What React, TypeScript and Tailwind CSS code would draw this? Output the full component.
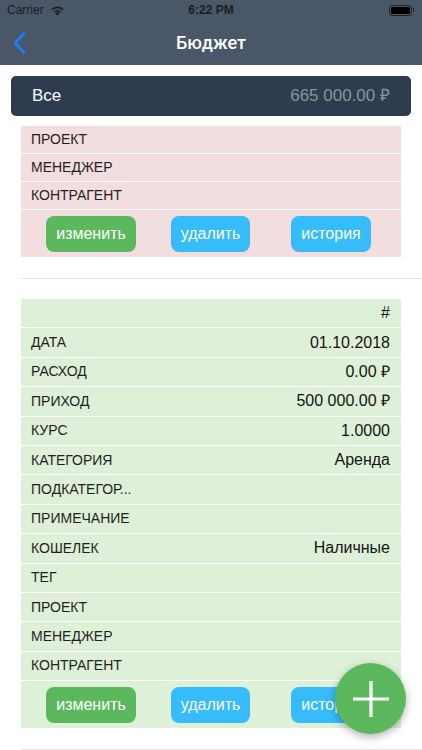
import React from 'react'

type Row = { label: string; value?: string }

const PINK_ROWS: Row[] = [{ label: 'ПРОЕКТ' }, { label: 'МЕНЕДЖЕР' }, { label: 'КОНТРАГЕНТ' }]

const GREEN_ROWS: Row[] = [
  { label: '', value: '#' },
  { label: 'ДАТА', value: '01.10.2018' },
  { label: 'РАСХОД', value: '0.00 ₽' },
  { label: 'ПРИХОД', value: '500 000.00 ₽' },
  { label: 'КУРС', value: '1.0000' },
  { label: 'КАТЕГОРИЯ', value: 'Аренда' },
  { label: 'ПОДКАТЕГОР...' },
  { label: 'ПРИМЕЧАНИЕ' },
  { label: 'КОШЕЛЕК', value: 'Наличные' },
  { label: 'ТЕГ' },
  { label: 'ПРОЕКТ' },
  { label: 'МЕНЕДЖЕР' },
  { label: 'КОНТРАГЕНТ' },
]

function Wifi() {
  return (
    <svg width="15" height="11" viewBox="0 0 15 11" className="ml-[6px]">
      <path d="M7.5 10.6 L5.3 8.2 A3.2 3.2 0 0 1 9.7 8.2 Z" fill="#1c1c1e" />
      <path d="M3.7 6.5 A5.4 5.4 0 0 1 11.3 6.5 L10.1 7.7 A3.8 3.8 0 0 0 4.9 7.7 Z" fill="#1c1c1e" />
      <path d="M1.4 4.1 A8.6 8.6 0 0 1 13.6 4.1 L12.4 5.3 A6.9 6.9 0 0 0 2.6 5.3 Z" fill="#1c1c1e" />
    </svg>
  )
}

function Battery() {
  return (
    <div className="flex items-center">
      <div className="flex h-[11px] w-[23px] items-center rounded-[3px] border border-[#222] p-[1px]">
        <div className="h-full w-full rounded-[1.5px] bg-black" />
      </div>
      <div className="ml-[1px] h-[4px] w-[1.5px] rounded-r-sm bg-[#222]" />
    </div>
  )
}

function Buttons() {
  return (
    <div className="flex h-[47px] items-center pl-[25px] text-[16px] text-white">
      <button className="h-[36px] w-[90px] rounded-[8px] bg-[#5cb85c]">изменить</button>
      <button className="ml-[35px] h-[36px] w-[79px] rounded-[8px] bg-[#36bcfb]">удалить</button>
      <button className="ml-[41px] h-[36px] w-[80px] rounded-[8px] bg-[#36bcfb]">история</button>
    </div>
  )
}

function Card({ rows, tone, rowH }: { rows: Row[]; tone: string; rowH: string }) {
  return (
    <div className={`ml-[21px] w-[380px] ${tone}`}>
      {rows.map((r, i) => (
        <div key={i} className={`flex ${rowH} items-center justify-between border-b-[1.5px] border-white pl-[10px] pr-[11px]`}>
          <span className="text-[14px] text-[#1f1f1f]">{r.label}</span>
          {r.value && <span className="text-[16px] text-[#141414]">{r.value}</span>}
        </div>
      ))}
      <Buttons />
    </div>
  )
}

export default function App() {
  return (
    <div className="relative h-[750px] w-[422px] overflow-hidden bg-white font-['Liberation_Sans',sans-serif]">
      <header className="bg-[#4a5769]">
        <div className="relative flex h-[20px] items-center px-[7px] text-[12px] text-[#1c1c1e]">
          <span>Carrier</span>
          <Wifi />
          <span className="absolute left-1/2 -translate-x-1/2 font-bold">6:22 PM</span>
          <div className="ml-auto mr-[1px]">
            <Battery />
          </div>
        </div>
        <div className="relative flex h-[45px] items-center justify-center">
          <svg width="13" height="22" viewBox="0 0 13 22" className="absolute left-[13px] top-[12px]">
            <path d="M11 1.5 L2 11 L11 20.5" fill="none" stroke="#1a7ff5" strokeWidth="3" strokeLinecap="round" strokeLinejoin="round" />
          </svg>
          <h1 className="font-['Roboto',sans-serif] text-[18px] font-medium text-white">Бюджет</h1>
        </div>
      </header>

      <div className="px-[11px] pt-[11px]">
        <div className="flex h-[40px] items-center justify-between rounded-[5px] bg-[#2e3c4f] pl-[21px] pr-[21px] text-[17px]">
          <span className="text-white">Все</span>
          <span className="text-[#8b939c]">665 000.00 ₽</span>
        </div>
      </div>

      <div className="pt-[10px]">
        <Card rows={PINK_ROWS} tone="bg-[#f2dede]" rowH="h-[28px]" />
      </div>
      <div className="mt-[21px] ml-[21px] h-px bg-[#e4e4e4]" />
      <div className="pt-[20px]">
        <Card rows={GREEN_ROWS} tone="bg-[#dff0d8]" rowH="h-[29.4px]" />
      </div>
      <div className="mt-[21px] ml-[21px] h-px bg-[#e4e4e4]" />

      <button className="absolute left-[335px] top-[663px] flex h-[71px] w-[71px] items-center justify-center rounded-full bg-[#5cb85c] shadow-[0_3px_8px_rgba(0,0,0,0.3)]">
        <svg width="38" height="38" viewBox="0 0 38 38">
          <path d="M19 1 V37 M1 19 H37" stroke="white" strokeWidth="3.2" />
        </svg>
      </button>
    </div>
  )
}
